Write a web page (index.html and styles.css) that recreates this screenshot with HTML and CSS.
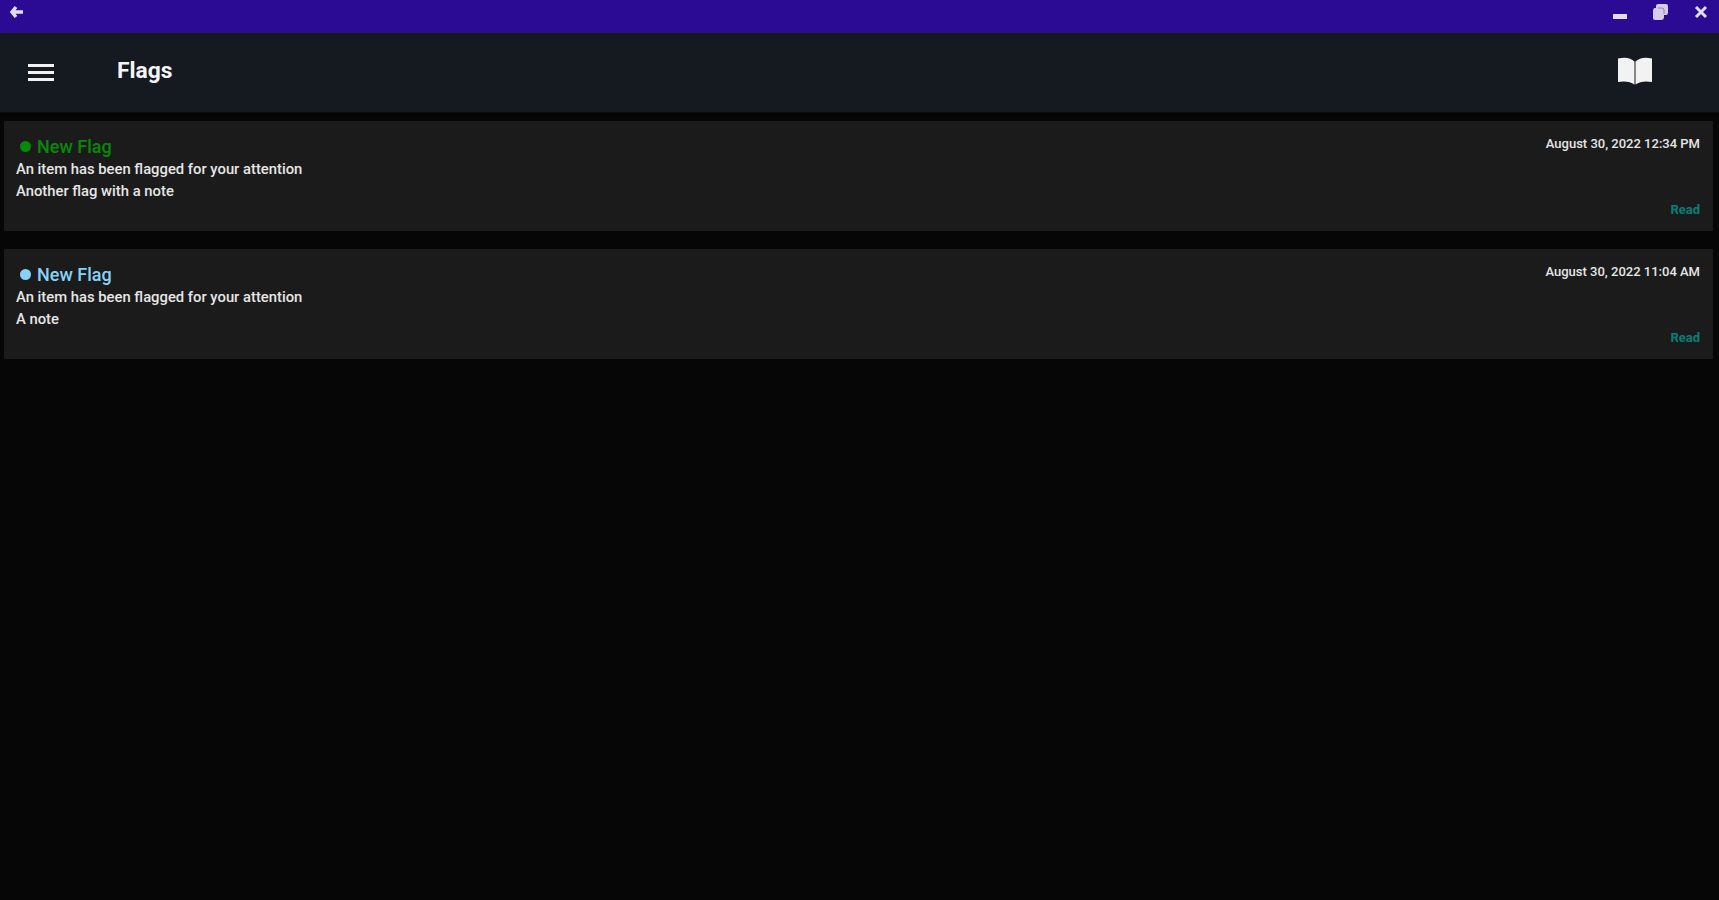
FILE: index.html
```html
<!DOCTYPE html>
<html lang="en">
<head>
    <meta charset="UTF-8">
    <meta name="viewport" content="width=device-width, initial-scale=1.0">
    <title>Flags</title>
    <link rel="stylesheet" href="styles.css">
</head>
<body>
    <!-- Window bar -->
    <div class="window-bar">
        <svg class="back-icon" width="16" height="16" viewBox="0 0 16 16"><path d="M15 8H5M8 3L4 8l4 5"/></svg>
        <div class="window-controls">
            <svg width="16" height="16" viewBox="0 0 16 16"><path d="M2 12.500h14" stroke-width="5"/></svg>
            <svg width="18" height="16" viewBox="0 0 18 16">
                <path class="fill" d="M7 0h8q2 0 2 2v7q0 2-2 2h-2v2q0 3-3 3H4q-2 0-2-2V7q0-3 2-3h1V2q0-2 2-2z"/>
                <path class="detail" d="M7 4h4q2 0 2 2v4"/>
            </svg>
            <svg width="16" height="16" viewBox="0 0 16 16"><path d="M3 3l10 10M13 3L3 13"/></svg>
        </div>
    </div>

    <!-- App header -->
    <header class="app-header">
        <svg class="menu-icon" width="28" height="20" viewBox="0 0 28 20"><path d="M1 2.500h26M1 9.500h26M1 16.500h26"/></svg>
        <h1 class="page-title">Flags</h1>
        <svg class="book-icon" width="34" height="28" viewBox="0 0 34 28">
            <path d="M0 1.500Q11-1 16.500 4.500V27.500Q10 23 0 25z"/>
            <path d="M34 1.500Q23-1 17.500 4.500V27.500Q24 23 34 25z"/>
        </svg>
    </header>

    <!-- Flag list -->
    <main class="flag-list">
        <article class="flag-card unread">
            <div class="flag-content">
                <h2 class="flag-title"><span class="flag-dot"></span>New Flag</h2>
                <p>An item has been flagged for your attention</p>
                <p>Another flag with a note</p>
            </div>
            <div class="flag-side">
                <time>August 30, 2022 12:34 PM</time>
                <a class="read-link">Read</a>
            </div>
        </article>
        <article class="flag-card">
            <div class="flag-content">
                <h2 class="flag-title"><span class="flag-dot"></span>New Flag</h2>
                <p>An item has been flagged for your attention</p>
                <p>A note</p>
            </div>
            <div class="flag-side">
                <time>August 30, 2022 11:04 AM</time>
                <a class="read-link">Read</a>
            </div>
        </article>
    </main>
</body>
</html>
```

FILE: styles.css
```css
* {
    margin: 0;
    padding: 0;
    box-sizing: border-box;
}

body {
    font-family: Roboto, sans-serif;
    background: #060606;
    color: #e6e6e6;
    min-height: 100vh;
}

.window-bar {
    display: flex;
    justify-content: space-between;
    height: 33px;
    padding: 4px 10px 0 8px;
    background: #2b0a94;
}

.window-bar svg {
    fill: none;
    stroke: #e2dcf4;
    stroke-width: 3;
}

.window-bar .back-icon {
    stroke-width: 3.5;
}

.window-bar .fill {
    fill: #d5cdeb;
    stroke: none;
}

.window-bar .detail {
    stroke: #8d7fc2;
    stroke-width: 1;
}

.window-controls {
    display: flex;
    gap: 24px;
}

.app-header {
    display: flex;
    align-items: center;
    height: 80px;
    padding: 0 67px 0 27px;
    background: #151920;
    border-bottom: 1px solid #0b0d10;
}

.menu-icon {
    stroke: #f2f2f2;
    stroke-width: 3;
}

.page-title {
    margin: -4px 0 0 62px;
    font-size: 22.8px;
    font-weight: 700;
    color: #f5f5f5;
}

.book-icon {
    margin: -4px 0 0 auto;
    fill: #f2f2f2;
}

.flag-list {
    display: flex;
    flex-direction: column;
    gap: 18px;
    padding: 8px 6px 0 4px;
    background: #060606;
}

.flag-card {
    display: flex;
    justify-content: space-between;
    height: 110px;
    padding: 14px 13px 11px 12px;
    background: #1b1b1b;
}

.flag-title {
    display: flex;
    align-items: center;
    height: 23px;
    font-size: 18px;
    font-weight: 500;
    color: #87d3f8;
}

.flag-dot {
    width: 11px;
    height: 11px;
    margin: 0 6px 0 4px;
    border-radius: 50%;
    background: #87d3f8;
}

.unread .flag-title {
    color: #078a07;
}

.unread .flag-dot {
    background: #078a07;
}

.flag-content p {
    font-size: 14.8px;
    font-weight: 500;
    line-height: 22px;
}

.flag-side {
    display: flex;
    flex-direction: column;
    justify-content: space-between;
    align-items: flex-end;
}

.flag-side time {
    font-size: 13px;
    font-weight: 500;
    line-height: 17px;
}

.read-link {
    font-size: 13px;
    font-weight: 700;
    line-height: 21px;
    color: #087f76;
}
```
